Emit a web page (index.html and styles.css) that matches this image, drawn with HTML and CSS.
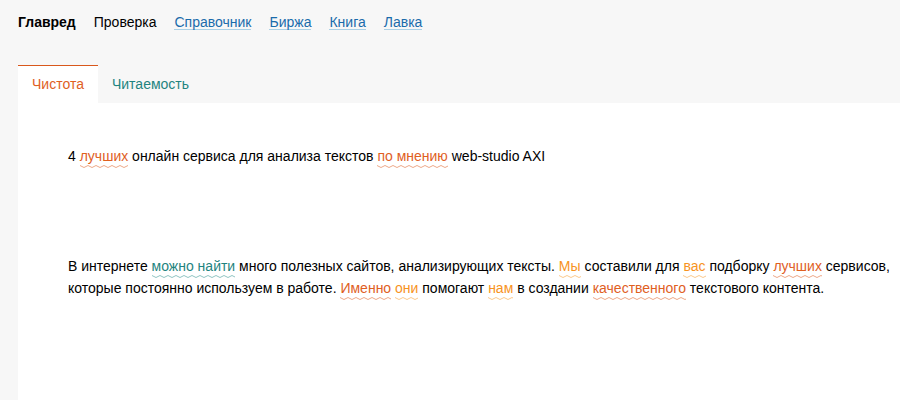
FILE: index.html
```html
<!DOCTYPE html>
<html lang="ru">
<head>
  <meta charset="UTF-8">
  <meta name="viewport" content="width=device-width, initial-scale=1.0">
  <title>Главред</title>
  <link rel="stylesheet" href="styles.css">
</head>
<body>
  <header class="header">
    <nav class="menu">
      <span class="logo">Главред</span>
      <span class="current">Проверка</span>
      <a href="#help">Справочник</a>
      <a href="#jobs">Биржа</a>
      <a href="#book">Книга</a>
      <a href="#shop">Лавка</a>
    </nav>
  </header>

  <main class="editor">
    <div class="tabs" role="tablist">
      <button type="button" class="tab active" role="tab" aria-selected="true">Чистота</button>
      <button type="button" class="tab" role="tab" aria-selected="false">Читаемость</button>
    </div>
    <div class="text">
      <p>4 <span class="hint red">лучших</span> онлайн сервиса для анализа текстов <span class="hint red">по мнению</span> web-studio AXI</p>
      <p>В интернете <span class="hint teal">можно найти</span> много полезных сайтов, анализирующих тексты. <span class="hint yellow">Мы</span> составили для <span class="hint yellow">вас</span> подборку <span class="hint red">лучших</span> сервисов, которые постоянно используем в работе. <span class="hint red">Именно</span> <span class="hint yellow">они</span> помогают <span class="hint yellow">нам</span> в создании <span class="hint red">качественного</span> текстового контента.</p>
    </div>
  </main>
</body>
</html>
```

FILE: styles.css
```css
body {
  margin: 0;
  min-height: 100vh;
  display: flex;
  flex-direction: column;
  background-color: #f7f7f7;
  color: #000;
  font-family: "Liberation Sans", Arial, sans-serif;
  font-size: 14px;
  line-height: 22px;
}

.header {
  padding: 11px 18px 32px;
}

.menu {
  display: flex;
  flex-wrap: wrap;
  gap: 0 18px;
}

.menu a {
  height: 18px;
  color: #1a6bab;
  text-decoration: none;
  border-bottom: 1px solid #a9d0e6;
}

.logo {
  font-weight: bold;
}

.editor {
  flex: 1;
  display: flex;
  flex-direction: column;
  margin-left: 18px;
}

.tabs {
  display: flex;
}

.tab {
  padding: 7px 14px 8px;
  border: 0;
  border-top: 1px solid transparent;
  background: none;
  color: #1f8480;
  font: inherit;
  cursor: pointer;
}

.tab.active {
  border-top-color: #d9581c;
  background-color: #fff;
  color: #e0601f;
}

.text {
  flex: 1;
  padding: 42px 8px 42px 50px;
  background-color: #fff;
}

.text p {
  margin: 0 0 88px;
}

.text p:last-child {
  margin-bottom: 0;
}

/* Wavy underline under the marked words */
.hint {
  padding-bottom: 4px;
  background-repeat: repeat-x;
  background-position: left bottom;
  background-size: 8px 3px;
}

.red {
  color: #e0601f;
  background-image: url("data:image/svg+xml,%3Csvg xmlns='http://www.w3.org/2000/svg' width='8' height='3'%3E%3Cpath d='M-2 1.5Q0-.5 2 1.5T6 1.5T10 1.5' fill='none' stroke='%23eda787'/%3E%3C/svg%3E");
}

.yellow {
  color: #f7931e;
  background-image: url("data:image/svg+xml,%3Csvg xmlns='http://www.w3.org/2000/svg' width='8' height='3'%3E%3Cpath d='M-2 1.5Q0-.5 2 1.5T6 1.5T10 1.5' fill='none' stroke='%23fbc98c'/%3E%3C/svg%3E");
}

.teal {
  color: #1f8480;
  background-image: url("data:image/svg+xml,%3Csvg xmlns='http://www.w3.org/2000/svg' width='8' height='3'%3E%3Cpath d='M-2 1.5Q0-.5 2 1.5T6 1.5T10 1.5' fill='none' stroke='%238fc4c2'/%3E%3C/svg%3E");
}
```
